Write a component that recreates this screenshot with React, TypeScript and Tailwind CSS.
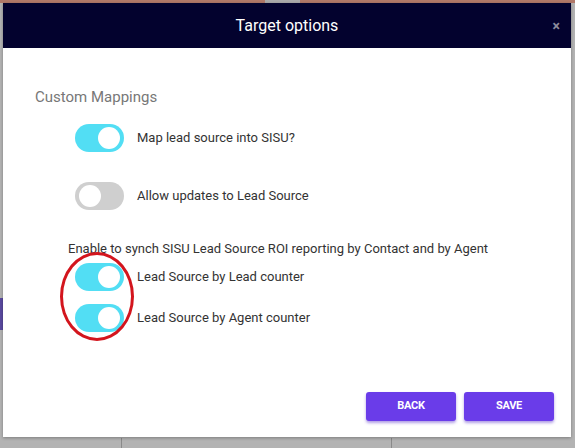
import React from 'react';

function Toggle({ on }: { on: boolean }) {
  return (
    <div
      className={
        'relative h-[28px] w-[49px] shrink-0 rounded-full ' +
        (on ? 'bg-[#52def4]' : 'bg-[#cfcfcf]')
      }
    >
      <div
        className={
          'absolute top-[3px] h-[22px] w-[22px] rounded-full bg-white ' +
          (on ? 'right-[4px]' : 'left-[4px]')
        }
      />
    </div>
  );
}

function Row({ on, label, className = '' }: { on: boolean; label: string; className?: string }) {
  return (
    <div className={'flex items-center gap-[13px] pl-[72px] ' + className}>
      <Toggle on={on} />
      <span className="text-[13px] text-[#333]">{label}</span>
    </div>
  );
}

export default function App() {
  return (
    <div
      className="relative h-[448px] w-[575px] overflow-hidden bg-[#b3b3b3]"
      style={{ fontFamily: 'Roboto, "Liberation Sans", sans-serif' }}
    >
      {/* page behind the modal */}
      <div className="absolute left-0 top-0 h-[3px] w-full bg-[#b07868]" />
      <div className="absolute left-[265px] top-0 h-[3px] w-[35px] bg-[#a9a9a9]" />
      <div className="absolute left-0 top-[298px] h-[32px] w-[3px] bg-[#5a4aa0]" />
      <div className="absolute left-[121px] top-[438px] h-[10px] w-px bg-[#8a8a8a]" />
      <div className="absolute left-[391px] top-[438px] h-[10px] w-px bg-[#8a8a8a]" />

      <div className="relative ml-[3px] mt-[3px] flex h-[434px] w-[568px] flex-col bg-white shadow-[0_1px_3px_rgba(0,0,0,0.3)]">
        <div className="relative flex h-[45px] items-center justify-center bg-[#03022e]">
          <span className="text-[16px] text-white">Target options</span>
          <span className="absolute right-[11px] top-[13px] text-[14px] font-bold text-[#8c8c9c]">×</span>
        </div>

        <div className="relative flex flex-1 flex-col">
          <div className="ml-[32px] mt-[39px] text-[15px] leading-[20px] text-[#777]">Custom Mappings</div>
          <Row on label="Map lead source into SISU?" className="mt-[17px]" />
          <Row on={false} label="Allow updates to Lead Source" className="mt-[30px]" />
          <div className="ml-[65px] mt-[31px] text-[13px] leading-[16px] text-[#333]">
            Enable to synch SISU Lead Source ROI reporting by Contact and by Agent
          </div>
          <Row on label="Lead Source by Lead counter" className="mt-[6px]" />
          <Row on label="Lead Source by Agent counter" className="mt-[13px]" />

          <div className="absolute left-[57px] top-[204px] h-[89px] w-[74px] rounded-[50%] border-[3px] border-[#d3151d]" />

          <div className="mt-auto mb-[16px] flex justify-end gap-[8px] pr-[17px]">
            <button className="h-[29px] w-[90px] rounded-[3px] bg-[#6a3ce9] text-[11px] font-bold tracking-tight text-white shadow-[0_2px_3px_rgba(80,40,200,0.45)]">
              BACK
            </button>
            <button className="h-[29px] w-[90px] rounded-[3px] bg-[#6a3ce9] text-[11px] font-bold tracking-tight text-white shadow-[0_2px_3px_rgba(80,40,200,0.45)]">
              SAVE
            </button>
          </div>
        </div>
      </div>
    </div>
  );
}
